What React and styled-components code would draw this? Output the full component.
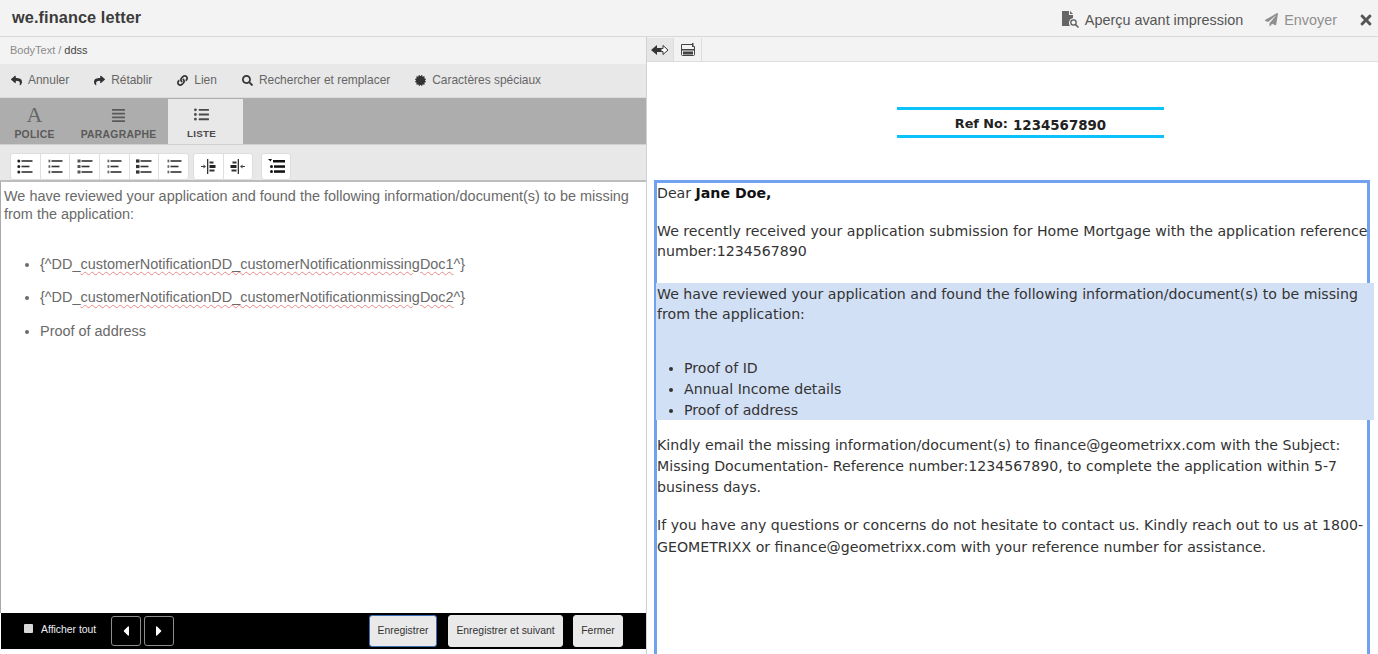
import React from "react";
import styled, { createGlobalStyle } from "styled-components";
import { FaReply, FaShare, FaLink, FaSearch, FaCertificate, FaAlignJustify, FaListUl, FaPaperPlane, FaTimes, FaCaretLeft, FaCaretRight } from "react-icons/fa";

const Global = createGlobalStyle`
  html, body { margin: 0; padding: 0; height: 100%; overflow: hidden; background: #fff; }
  #root { height: 654px; }
  * { box-sizing: border-box; }
  body { font-family: "Liberation Sans", Arial, sans-serif; }
`;

const Page = styled.div`
  height: 654px; width: 1378px; display: flex; flex-direction: column; overflow: hidden;
`;
const Header = styled.header`
  height: 37px; flex: none; background: #f3f3f3; border-bottom: 1px solid #d8d8d8;
  display: flex; align-items: center; padding: 3px 4px 0 12px;
`;
const Title = styled.h1`
  margin: -4px 0 0; font-size: 16.3px; font-weight: 700; color: #3c3c3c; letter-spacing: 0.1px; flex: 1;
`;
const HeadAction = styled.span`
  display: inline-flex; align-items: center; gap: 6px; font-size: 14.4px; margin-right: ${p => p.$mr}px;
  color: ${p => (p.$muted ? "#8f8f8f" : "#555")};
`;
const CloseBtn = styled.span`
  display: inline-flex; color: #555; font-size: 16px;
`;
const Split = styled.div`
  flex: 1; display: flex; min-height: 0;
`;
const Left = styled.section`
  width: 647px; flex: none; display: flex; flex-direction: column; border-right: 1px solid #c9d3da; padding-bottom: 5px;
`;
const Crumb = styled.div`
  height: 27px; flex: none; background: #f3f3f3; font-size: 11px; color: #8a8a8a;
  display: flex; align-items: center; padding: 0 10px 1px; gap: 3px;
  b { font-weight: 400; color: #444; }
`;
const ActionBar = styled.div`
  height: 34px; flex: none; background: #e8e8e8; border-bottom: 1px solid #dcdcdc;
  display: flex; align-items: center; padding: 0 0 1px 11px; gap: 25px;
`;
const Action = styled.span`
  display: inline-flex; align-items: center; gap: 6px; font-size: 11.95px; color: #666;
  svg { color: #333; width: 11px; height: 11px; flex: none; }
`;
const Tabs = styled.div`
  height: 47px; flex: none; background: #adadad; display: flex; border-bottom: 1px solid #d0d0d0; padding-top: 1px;
`;
const Tab = styled.div`
  width: ${p => p.$w}px; flex: none; display: flex; flex-direction: column; align-items: center;
  background: ${p => (p.$active ? "#e8e8e8" : "transparent")};
  color: ${p => (p.$active ? "#4a4a4a" : "#5a5a5a")};
  padding: ${p => (p.$active ? "6px 8px 0 0" : "7px 0 0")};
`;
const TabIcon = styled.span`
  height: 18px; display: flex; align-items: center; justify-content: center; font-size: 15px;
`;
const SerifA = styled.span`
  font-family: "Liberation Serif", serif; font-size: 22px; line-height: 18px; color: #666;
`;
const TabLabel = styled.span`
  font-size: ${p => (p.$active ? 9.8 : 10.4)}px; font-weight: 700; letter-spacing: 0.25px; margin-top: 5px;
`;
const ListBar = styled.div`
  height: 37px; flex: none; background: #e8e8e8; display: flex; align-items: flex-start; padding: 8px 0 0 10px;
  border-bottom: 2px solid #bdbdbd;
`;
const Group = styled.div`
  display: flex; background: #fff; border: 1px solid #dedede; border-radius: 3px;
  width: ${p => p.$w}px; margin-right: ${p => p.$mr}px; height: 27px;
`;
const ToolBtn = styled.span`
  flex: 1; display: flex; align-items: center; justify-content: center;
  & + & { border-left: 1px solid #dedede; }
`;
const Editor = styled.div`
  flex: 1; background: #fff; color: #6a6a6a; font-size: 14.45px; line-height: 18px; padding: 5px 4px 0 3px;
  border-left: 1px solid #aaa; min-height: 0;
  p { margin: 0; }
  ul { margin: 32px 0 0; padding-left: 36px; }
  li { margin-bottom: 15.4px; }
`;
const Underlined = styled.span`
  text-decoration: underline wavy #e88a8a 1px;
  text-underline-offset: 2px;
`;
const Footer = styled.footer`
  height: 36px; flex: none; background: #000; margin-left: 1px; display: flex; align-items: center; padding: 0 23px 0 23px;
`;
const Check = styled.span`
  width: 9px; height: 9px; background: #d8d8d8; border-radius: 1px; margin: -6px 8px 0 0; flex: none;
`;
const ShowAll = styled.span`
  color: #e8eef5; font-size: 10.4px; width: 70px; margin-top: -3px; flex: none;
`;
const NavBtn = styled.span`
  width: 30px; height: 30px; border: 1px solid #8c8c8c; border-radius: 3px; color: #fff; margin-right: 3px;
  display: flex; align-items: center; justify-content: center; font-size: 16px; flex: none;
`;
const Spacer = styled.span` flex: 1; `;
const SaveBtn = styled.span`
  height: 32px; width: ${p => p.$w}px; margin-left: ${p => p.$ml}px; background: #e9e9e9; border-radius: 3px;
  font-size: 10.4px; color: #333; display: flex; align-items: center; justify-content: center; flex: none; margin-top: -1px;
  border: 1px solid ${p => (p.$focus ? "#3d6fb5" : "#e9e9e9")};
`;
const Right = styled.section`
  flex: 1; display: flex; flex-direction: column; min-width: 0; background: #fff;
`;
const PreviewBar = styled.div`
  height: 25px; flex: none; background: #f3f3f3; border-bottom: 1px solid #dcdcdc; display: flex; padding-top: 1px;
`;
const PreviewBtn = styled.span`
  width: ${p => p.$w}px; display: flex; align-items: center; justify-content: center;
  background: ${p => (p.$active ? "#e6e6e6" : "transparent")};
  border-right: 1px solid #dcdcdc;
  margin-right: ${p => (p.$active ? 1 : 0)}px;
`;
const Preview = styled.div`
  flex: 1; display: flex; flex-direction: column; min-height: 0; padding: 45px 0 0 7px;
`;
const RefBox = styled.div`
  width: 267px; height: 31px; margin: 0 0 44px 243px; flex: none;
  border-top: 3px solid #0cc2fb; border-bottom: 3px solid #0cc2fb;
  display: flex; align-items: center; justify-content: center; gap: 5px; color: #222; padding-top: 1px;
  font-family: "DejaVu Sans", Verdana, sans-serif; font-weight: 700; font-size: 12.8px;
`;
const RefNo = styled.span`
  font-size: 13.4px; margin-top: 4px;
`;
const Letter = styled.div`
  flex: 1; width: 716px; border: 3px solid #70a2f0; border-bottom: none;
  font-family: "DejaVu Sans", Verdana, sans-serif; font-size: 14.15px; line-height: 21px; color: #333;
  margin-top: -2px;
  p { margin: 0; white-space: nowrap; }
  b { color: #111; }
`;
const Block = styled.div`
  margin-top: ${p => p.$mt}px;
  line-height: ${p => p.$lh}px;
`;
const Highlight = styled.div`
  background: #d2e0f6; margin: 22px -7px 0 -1px; height: 137px; padding: 1px 0 0 1px; position: relative;
  line-height: 20px;
  ul { margin: 34px 0 0; padding-left: 27px; }
  li { line-height: 21px; }
`;

const rows = [3, 8.5, 14];
const lineLen = [11, 8, 11];
const Marker = ({ kind, y }) => {
  if (kind === "bullet") return <circle cx="1.800" cy={y} r="1.500" fill="#222" />;
  if (kind === "roman") return <rect x="0" y={y - 1.6} width="3.500" height="3.200" fill="#333" />;
  if (kind === "alpha") return <rect x="0.500" y={y - 1.500} width="3" height="3" fill="#555" />;
  return <rect x="1.500" y={y - 1.300} width="1.800" height="2.600" fill="#666" />;
};
const ListGlyph = ({ kind }) => (
  <svg width="16" height="17" viewBox="0 0 16 17">
    {rows.map((y, i) => (
      <g key={y}>
        <Marker kind={kind} y={y} />
        <rect x="4.500" y={y - 0.8} width={lineLen[i]} height="1.600" fill="#333" />
      </g>
    ))}
  </svg>
);
const IndentGlyph = ({ flip }) => (
  <svg width="15" height="17" viewBox="0 0 15 17" style={flip ? { transform: "scaleX(-1)" } : undefined}>
    <rect x="6" y="1" width="1.300" height="15" fill="#333" />
    <path d="M0 8h2.500V6.500L5 8.500l-2.500 2V9H0z" fill="#444" />
    <rect x="8.500" y="3.500" width="4" height="2" fill="#333" />
    <rect x="8.500" y="7" width="6" height="3" fill="#222" />
    <rect x="8.500" y="11.500" width="5" height="2" fill="#333" />
  </svg>
);
const OutlineGlyph = () => (
  <svg width="17" height="15" viewBox="0 0 17 15">
    <path d="M0 0h4L2.500 2.500z" fill="#111" />
    <rect x="5" y="1" width="12" height="2.500" fill="#111" />
    <circle cx="3.500" cy="7.500" r="1.500" fill="#111" />
    <rect x="6" y="6.300" width="11" height="2.500" fill="#111" />
    <circle cx="3.500" cy="12.500" r="1.500" fill="#111" />
    <rect x="6" y="11.300" width="11" height="2.500" fill="#111" />
  </svg>
);
const SwapGlyph = () => (
  <svg width="18" height="12" viewBox="0 0 18 12">
    <path d="M0 6 6 1v3h5v4H6v3z" fill="#333" />
    <path d="M10.500 4.500H12V1.500L17 6l-5 4.500V7.500h-1.500" fill="#fff" stroke="#333" strokeWidth="1" />
  </svg>
);
const PanelGlyph = () => (
  <svg width="14" height="13" viewBox="0 0 14 13">
    <path d="M.5 1.500h11v2h2v8a1 1 0 0 1-1 1H1.500a1 1 0 0 1-1-1z" fill="none" stroke="#444" />
    <rect x="0.500" y="6" width="13" height="1.500" fill="#444" />
    <rect x="2" y="8.500" width="10" height="3" fill="#444" />
    <rect x="11" y="0" width="1.500" height="3.500" fill="#444" />
  </svg>
);
const PrintGlyph = () => (
  <svg width="17" height="17" viewBox="0 0 17 17">
    <path d="M0 0h7v4h4v3a5 5 0 0 0-3 8H0z" fill="#666" />
    <path d="M8 0l3 3H8z" fill="#666" />
    <circle cx="11.500" cy="11.500" r="2.700" fill="none" stroke="#555" strokeWidth="1.200" />
    <path d="M13.500 13.500 16.500 16.500" stroke="#555" strokeWidth="1.400" />
  </svg>
);

const actions = [
  [FaReply, "Annuler"],
  [FaShare, "Rétablir"],
  [FaLink, "Lien"],
  [FaSearch, "Rechercher et remplacer"],
  [FaCertificate, "Caractères spéciaux"],
];
const listTools = ["bullet", "num", "alpha", "num", "roman", "num"];

export default function App() {
  return (
    <Page>
      <Global />
      <Header>
        <Title>we.finance letter</Title>
        <HeadAction $mr={22}><PrintGlyph />Aperçu avant impression</HeadAction>
        <HeadAction $muted $mr={21}><FaPaperPlane size={13} />Envoyer</HeadAction>
        <CloseBtn><FaTimes /></CloseBtn>
      </Header>
      <Split>
        <Left>
          <Crumb>BodyText / <b>ddss</b></Crumb>
          <ActionBar>
            {actions.map(([Icon, label]) => (
              <Action key={label}><Icon />{label}</Action>
            ))}
          </ActionBar>
          <Tabs>
            <Tab $w={69}>
              <TabIcon><SerifA>A</SerifA></TabIcon>
              <TabLabel>POLICE</TabLabel>
            </Tab>
            <Tab $w={99}>
              <TabIcon><FaAlignJustify /></TabIcon>
              <TabLabel>PARAGRAPHE</TabLabel>
            </Tab>
            <Tab $w={75} $active>
              <TabIcon><FaListUl /></TabIcon>
              <TabLabel $active>LISTE</TabLabel>
            </Tab>
          </Tabs>
          <ListBar>
            <Group $w={179} $mr={4}>
              {listTools.map((k, i) => <ToolBtn key={i}><ListGlyph kind={k} /></ToolBtn>)}
            </Group>
            <Group $w={60} $mr={8}>
              <ToolBtn><IndentGlyph /></ToolBtn>
              <ToolBtn><IndentGlyph flip /></ToolBtn>
            </Group>
            <Group $w={30} $mr={0}>
              <ToolBtn><OutlineGlyph /></ToolBtn>
            </Group>
          </ListBar>
          <Editor>
            <p>We have reviewed your application and found the following information/document(s) to be missing from the application:</p>
            <ul>
              <li>{"{^DD_"}<Underlined>customerNotificationDD_customerNotificationmissingDoc1</Underlined>{"^}"}</li>
              <li>{"{^DD_"}<Underlined>customerNotificationDD_customerNotificationmissingDoc2</Underlined>{"^}"}</li>
              <li>Proof of address</li>
            </ul>
          </Editor>
          <Footer>
            <Check />
            <ShowAll>Afficher tout</ShowAll>
            <NavBtn><FaCaretLeft /></NavBtn>
            <NavBtn><FaCaretRight /></NavBtn>
            <Spacer />
            <SaveBtn $focus $w={68} $ml={0}>Enregistrer</SaveBtn>
            <SaveBtn $w={115} $ml={11}>Enregistrer et suivant</SaveBtn>
            <SaveBtn $w={50} $ml={10}>Fermer</SaveBtn>
          </Footer>
        </Left>
        <Right>
          <PreviewBar>
            <PreviewBtn $w={27} $active><SwapGlyph /></PreviewBtn>
            <PreviewBtn $w={27}><PanelGlyph /></PreviewBtn>
          </PreviewBar>
          <Preview>
            <RefBox>Ref No: <RefNo>1234567890</RefNo></RefBox>
            <Letter>
              <p>Dear <b>Jane Doe,</b></p>
              <Block $mt={17} $lh={20}>
                <p>We recently received your application submission for Home Mortgage with the application reference</p>
                <p>number:1234567890</p>
              </Block>
              <Highlight>
                <p>We have reviewed your application and found the following information/document(s) to be missing</p>
                <p>from the application:</p>
                <ul>
                  <li>Proof of ID</li>
                  <li>Annual Income details</li>
                  <li>Proof of address</li>
                </ul>
              </Highlight>
              <Block $mt={15} $lh={21}>
                <p>Kindly email the missing information/document(s) to finance@geometrixx.com with the Subject:</p>
                <p>Missing Documentation- Reference number:1234567890, to complete the application within 5-7</p>
                <p>business days.</p>
              </Block>
              <Block $mt={16} $lh={22}>
                <p>If you have any questions or concerns do not hesitate to contact us. Kindly reach out to us at 1800-</p>
                <p>GEOMETRIXX or finance@geometrixx.com with your reference number for assistance.</p>
              </Block>
            </Letter>
          </Preview>
        </Right>
      </Split>
    </Page>
  );
}
